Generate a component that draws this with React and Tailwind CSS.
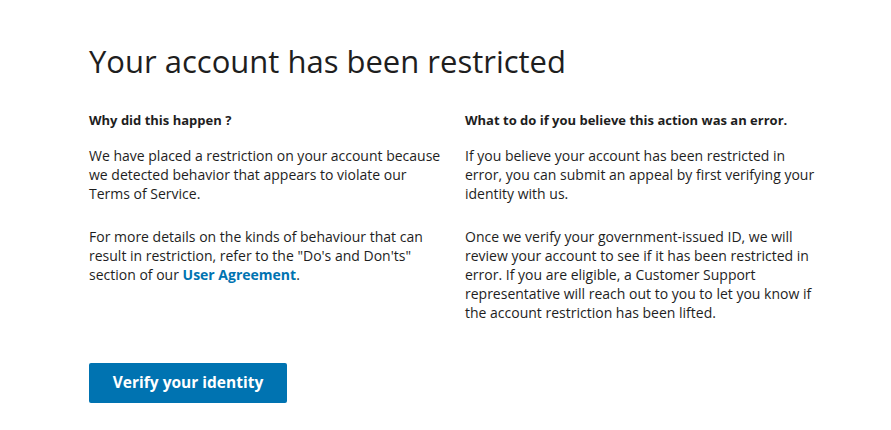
import React from "react";

export default function App() {
  return (
    <div
      className="min-h-[430px] w-full bg-white text-[#1e1e1e]"
      style={{ fontFamily: '"Open Sans", "Noto Sans", sans-serif' }}
    >
      <div className="pl-[89px] pt-[41px]">
        <h1 className="text-[31px] leading-[40px] font-normal">
          Your account has been restricted
        </h1>

        <div className="mt-[30px] grid grid-cols-[376px_374px] text-[14px] leading-[19px]">
          {/* left column */}
          <div className="pr-[24px]">
            <h2 className="font-bold text-[13px] leading-[19px]">Why did this happen ?</h2>
            <p className="mt-[16px]">
              We have placed a restriction on your account because we detected
              behavior that appears to violate our Terms of Service.
            </p>
            <p className="mt-[24px]">
              For more details on the kinds of behaviour that can result in
              restriction, refer to the "Do's and Don'ts" section of our{" "}
              <a href="#" className="font-bold text-[#0073b1]">
                User Agreement
              </a>
              .
            </p>
          </div>

          {/* right column */}
          <div className="pr-[22px]">
            <h2 className="font-bold text-[13px] leading-[19px] whitespace-nowrap">
              What to do if you believe this action was an error.
            </h2>
            <p className="mt-[16px]">
              If you believe your account has been restricted in error, you can
              submit an appeal by first verifying your identity with us.
            </p>
            <p className="mt-[24px]">
              Once we verify your government-issued ID, we will review your
              account to see if it has been restricted in error. If you are
              eligible, a Customer Support representative will reach out to you
              to let you know if the account restriction has been lifted.
            </p>
          </div>
        </div>

        <button className="mt-[41px] h-[40px] w-[198px] rounded-[2px] bg-[#0073b1] text-[15.5px] font-bold text-white">
          Verify your identity
        </button>
      </div>
    </div>
  );
}
